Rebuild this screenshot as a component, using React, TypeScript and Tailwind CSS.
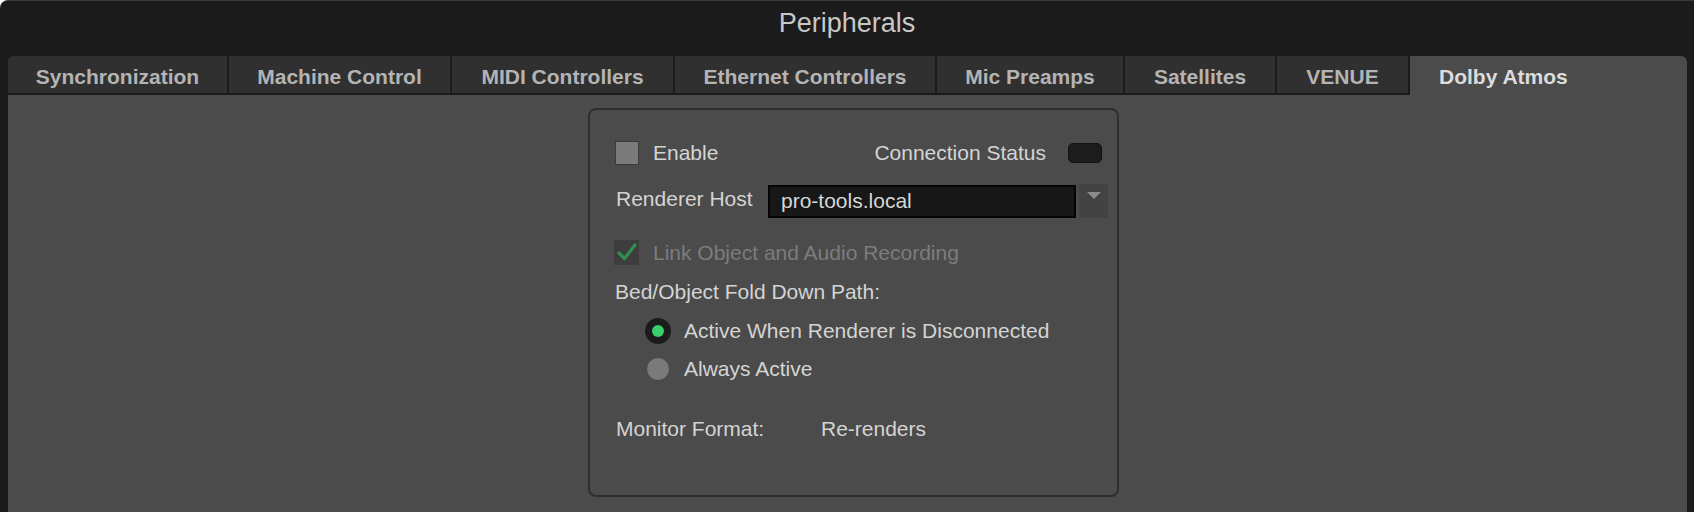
import React from "react";

const tabs = [
  { label: "Synchronization", w: "w-[221px]" },
  { label: "Machine Control", w: "w-[223px]" },
  { label: "MIDI Controllers", w: "w-[223px]" },
  { label: "Ethernet Controllers", w: "w-[262px]" },
  { label: "Mic Preamps", w: "w-[188px]" },
  { label: "Satellites", w: "w-[152px]" },
  { label: "VENUE", w: "w-[133px]" },
];

function Checkbox({ checked }: { checked?: boolean }) {
  if (checked) {
    return (
      <div className="w-[25px] h-[25px] bg-[#3d3d3d] flex items-center justify-center">
        <svg width="20" height="18" viewBox="0 0 20 18">
          <path d="M2 10 L7.5 15.5 L18 2" fill="none" stroke="#2f8f52" strokeWidth="3.2" strokeLinecap="round" strokeLinejoin="round" />
        </svg>
      </div>
    );
  }
  return <div className="w-[24px] h-[24px] bg-[#7b7b7b] border border-[#3a3a3a]" />;
}

function Radio({ on }: { on?: boolean }) {
  if (on) {
    return (
      <div className="w-[26px] h-[26px] rounded-full bg-[#1c1c1c] flex items-center justify-center">
        <div className="w-[12px] h-[12px] rounded-full bg-[#38cf6e]" />
      </div>
    );
  }
  return (
    <div className="w-[26px] h-[26px] flex items-center justify-center">
      <div className="w-[24px] h-[24px] rounded-full bg-[#7a7a7a] border border-[#454545]" />
    </div>
  );
}

export default function App() {
  return (
    <div
      className="w-[1694px] h-[512px] bg-[#1b1b1b] flex flex-col overflow-hidden border-t border-[#3a3a3a] rounded-tl-[8px] text-[#d4d4d4]"
      style={{ fontFamily: '"Liberation Sans", Arial, sans-serif' }}
    >
      {/* Title bar */}
      <div className="h-[55px] flex items-center justify-center">
        <span className="text-[27px] text-[#c8c8c8] leading-none -mt-[10px]">Peripherals</span>
      </div>

      {/* Tabs */}
      <div className="h-[39px] flex pl-[8px] pr-[7px]">
        {tabs.map((t, i) => (
          <div
            key={t.label}
            className={`${t.w} h-full flex items-center justify-center bg-[#303030] border-r-2 border-b-2 border-[#1b1b1b] text-[21px] font-bold text-[#b4b4b4] ${i === 0 ? "rounded-tl-[6px]" : ""}`}
          >
            <span className="mt-[4px]">{t.label}</span>
          </div>
        ))}
        <div className="flex-1 h-full flex items-center pl-[29px] bg-[#4b4b4b] rounded-tr-[6px] text-[21px] font-bold text-[#dcdcdc]">
          <span className="mt-[2px]">Dolby Atmos</span>
        </div>
      </div>

      {/* Content */}
      <div className="flex-1 ml-[8px] mr-[7px] bg-[#4b4b4b] pt-[13px] pl-[580px]">
        <div className="w-[531px] h-[389px] border-2 border-[#2e2e2e] rounded-[8px] flex flex-col text-[21px]">
          {/* Enable / Connection status */}
          <div className="mt-[31px] h-[24px] flex items-center pl-[25px] pr-[15px]">
            <Checkbox />
            <span className="ml-[14px]">Enable</span>
            <span className="ml-auto">Connection Status</span>
            <div className="ml-[22px] w-[34px] h-[20px] rounded-[5px] bg-[#1c1c1c] border border-[#111]" />
          </div>

          {/* Renderer host */}
          <div className="mt-[19px] h-[34px] flex items-center pl-[26px]">
            <span className="w-[152px] -mt-[4px]">Renderer Host</span>
            <div className="w-[308px] h-[33px] bg-[#171717] border-2 border-[#050505] flex items-center pl-[11px] text-[#d6d6d6]">
              pro-tools.local
            </div>
            <div className="ml-[3px] w-[29px] h-[34px] rounded-[3px] bg-[#434343] flex justify-center pt-[8px]">
              <svg width="14" height="8" viewBox="0 0 14 8">
                <path d="M0 0 H14 L7 7 Z" fill="#8c8c8c" />
              </svg>
            </div>
          </div>

          {/* Link object */}
          <div className="mt-[21px] h-[26px] flex items-center pl-[24px]">
            <Checkbox checked />
            <span className="ml-[14px] text-[#7c7c7c] mt-[2px]">Link Object and Audio Recording</span>
          </div>

          {/* Fold down path */}
          <div className="mt-[15px] h-[24px] flex items-center pl-[25px]">
            <span>Bed/Object Fold Down Path:</span>
          </div>

          <div className="mt-[14px] h-[26px] flex items-center pl-[55px]">
            <Radio on />
            <span className="ml-[13px]">Active When Renderer is Disconnected</span>
          </div>

          <div className="mt-[12px] h-[26px] flex items-center pl-[55px]">
            <Radio />
            <span className="ml-[13px]">Always Active</span>
          </div>

          {/* Monitor format */}
          <div className="mt-[35px] h-[24px] flex items-center pl-[26px]">
            <span className="w-[205px]">Monitor Format:</span>
            <span>Re-renders</span>
          </div>
        </div>
      </div>
    </div>
  );
}
